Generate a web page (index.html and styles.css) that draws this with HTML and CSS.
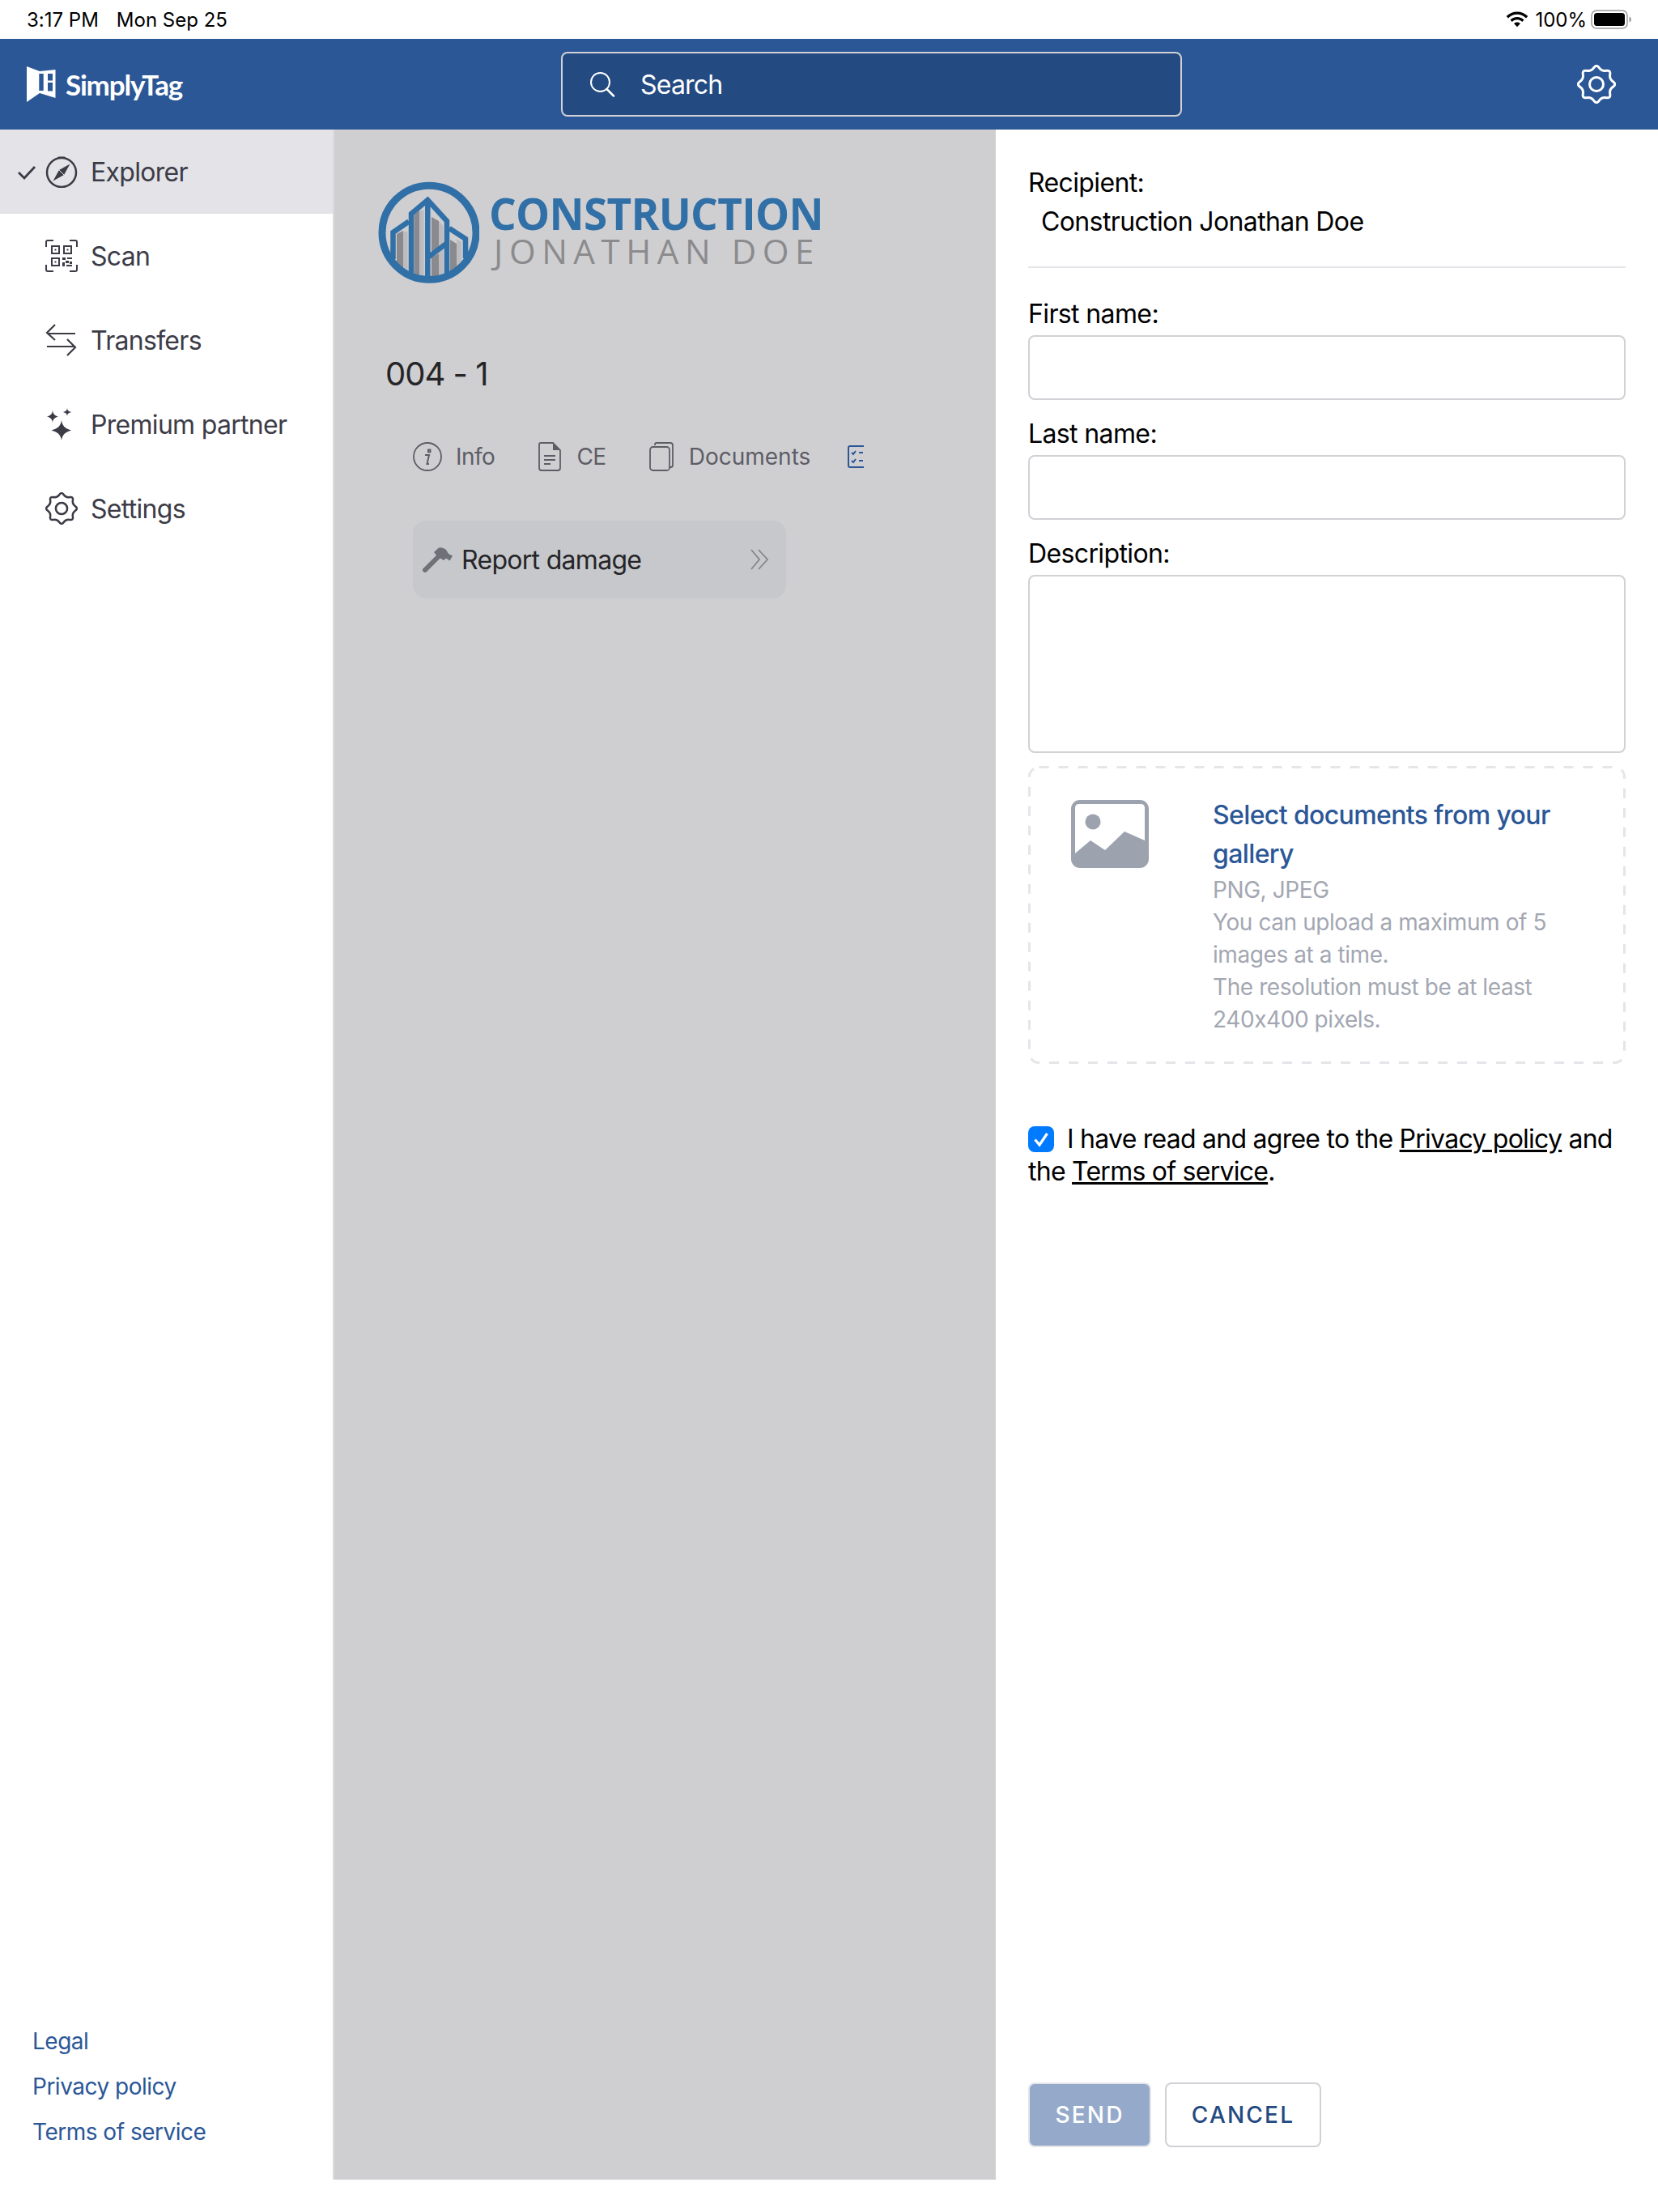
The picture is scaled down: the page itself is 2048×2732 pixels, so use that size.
FILE: index.html
```html
<!DOCTYPE html>
<html lang="en">
<head>
<meta charset="utf-8">
<title>SimplyTag</title>
<link rel="stylesheet" href="styles.css">
</head>
<body>
<svg class="defs" width="0" height="0" aria-hidden="true">
  <symbol id="gear" viewBox="0 0 48 48">
    <path d="M27.26 3.65Q30.51 8.29 36.1 7.3T40.7 11.9T44.36 20.75T44.36 27.26T40.7 36.1T36.1 40.7T27.26 44.36T20.75 44.36T11.9 40.7T7.3 36.1T3.65 27.26T3.65 20.75T7.3 11.9T11.9 7.3T20.75 3.65T27.26 3.65Z" fill="none" stroke="currentColor" stroke-width="3" stroke-linejoin="round"/>
    <circle cx="24" cy="24" r="8.5" fill="none" stroke="currentColor" stroke-width="3"/>
  </symbol>
</svg>
<div class="app">
  <div class="status">
    <div class="status-left"><span>3:17 PM</span><span>Mon Sep 25</span></div>
    <div class="status-right">
      <svg class="wifi" viewBox="0 0 28 20"><path d="M14 0.5C8.8 0.5 4.2 2.5 0.7 6L3 8.4C5.9 5.5 9.7 3.8 14 3.8S22.1 5.5 25 8.4L27.3 6C23.8 2.5 19.2 .5 14 .5ZM14 7C10.7 7 7.8 8.3 5.5 10.5L7.8 12.9C9.4 11.3 11.6 10.3 14 10.3S18.6 11.3 20.2 12.9L22.5 10.5C20.2 8.3 17.3 7 14 7ZM14 13.5C12.4 13.5 11.1 14.1 10 15.1L14 19.3L18 15.1C16.9 14.1 15.6 13.5 14 13.5Z" fill="#000"/></svg>
      <span>100%</span>
      <svg class="battery" viewBox="0 0 50 24"><rect x="1" y="1" width="44" height="22" rx="6" fill="none" stroke="#9a9a9c" stroke-width="1.5"/><rect x="4" y="4" width="38" height="16" rx="3.5" fill="#000"/><path d="M47.5 8.5C49 9 50 10.5 50 12S49 15 47.5 15.5Z" fill="#9a9a9c"/></svg>
    </div>
  </div>
  <header class="topbar">
    <div class="brand">
      <svg class="brand-mark" viewBox="0 0 36 44"><path d="M0 0L16 6L35.5 4V39L16 33L0 44Z" fill="#fff"/><path d="M15.3 9H20.7V30H15.3ZM26 9H32V17.6H26ZM26 20H32V30.5H26Z" fill="#2b5797"/></svg>
      <span class="brand-name">SimplyTag</span>
    </div>
    <div class="search">
      <svg class="search-icon" viewBox="0 0 32 32"><circle cx="13.5" cy="13.5" r="11.5" fill="none" stroke="#fff" stroke-width="2"/><path d="M21.5 22L30 30.5" stroke="#fff" stroke-width="2.5" stroke-linecap="round"/></svg>
      <span>Search</span>
    </div>
    <svg class="top-gear"><use href="#gear"/></svg>
  </header>
  <div class="content">
    <aside class="sidebar">
      <nav class="nav">
        <div class="nav-item active">
          <svg class="nav-check" viewBox="0 0 24 20"><path d="M2 10L9 17L22 3" fill="none" stroke="#3c3c47" stroke-width="2.8"/></svg>
          <svg class="nav-icon" viewBox="0 0 40 40"><circle cx="20" cy="21" r="18" fill="none" stroke="#3c3c47" stroke-width="2.5"/><path d="M16 1.5H24L25 3.5H15Z" fill="#3c3c47"/><path d="M30.5 10.5L23 24L9.5 31.5L17 18Z" fill="#3c3c47"/><path d="M17 18L23 24" stroke="#e3e3e8" stroke-width="1"/></svg>
          <span>Explorer</span>
        </div>
        <div class="nav-item">
          <svg class="nav-icon" viewBox="0 0 40 40"><path d="M1 9V3Q1 1 3 1H10M30 1H37Q39 1 39 3V9M39 31V37Q39 39 37 39H30M10 39H3Q1 39 1 37V31" fill="none" stroke="#3c3c47" stroke-width="2"/><path d="M8 8H17V17H8ZM23 8H32V17H23ZM8 23H17V32H8Z" fill="none" stroke="#3c3c47" stroke-width="2"/><path d="M11.5 11.5H13.5V13.5H11.5ZM26.5 11.5H28.5V13.5H26.5ZM11.5 26.5H13.5V28.5H11.5ZM21 22H25V25H21ZM27 22H33V24H27ZM25 26H29V29H25ZM21 28H24V33H21ZM30 27H33V30H30ZM26 31H33V33H26Z" fill="#3c3c47"/></svg>
          <span>Scan</span>
        </div>
        <div class="nav-item">
          <svg class="nav-icon" viewBox="0 0 40 40"><path d="M37 12H3M12 1L2 11L12 20M2 28H37M27 19L37 29L27 39" fill="none" stroke="#3c3c47" stroke-width="2.2"/></svg>
          <span>Transfers</span>
        </div>
        <div class="nav-item">
          <svg class="nav-icon" viewBox="0 0 40 40"><path d="M20 15C21 22 24 25 32 27.5C24 30 21 33 20 40C19 33 16 30 7.5 27.5C16 25 19 22 20 15ZM9 3C9.6 7 11 9 16 10.5C11 12 9.6 14 9 18C8.4 14 7 12 2 10.5C7 9 8.4 7 9 3ZM27 0C27.4 3 28.5 4 32 5C28.5 6 27.4 7 27 10C26.6 7 25.5 6 22 5C25.5 4 26.6 3 27 0Z" fill="#3c3c47"/></svg>
          <span>Premium partner</span>
        </div>
        <div class="nav-item">
          <svg class="nav-icon nav-gear"><use href="#gear"/></svg>
          <span>Settings</span>
        </div>
      </nav>
      <div class="side-links">
        <a>Legal</a>
        <a>Privacy policy</a>
        <a>Terms of service</a>
      </div>
    </aside>
    <main class="middle">
      <div class="company">
        <svg class="company-mark" viewBox="0 0 125 127">
          <path d="M31 62H36.5V110H31ZM51 36H56.5V118H51ZM75 49L80.5 55V78L75 82ZM75 88L80.5 84V116H75ZM97 71L103 75V98L97 106Z" fill="#bcbcc0"/>
          <path d="M23 65L31 61V108L23 102ZM44.5 41L51 36V117H44.5ZM66 44L75 49V81L66 87ZM66 94L75 89V119H66ZM89 72L97 77V108L89 112Z" fill="#8a8a8e"/>
          <circle cx="63" cy="63.3" r="58" fill="none" stroke="#3170a7" stroke-width="9"/>
          <path d="M18.5 96V63L38 49.5M41 117V40L61.3 23L85 49V114M61.3 23V120M63 93L84 77M88 58L108 71V95" fill="none" stroke="#3170a7" stroke-width="6.5"/>
        </svg>
        <div class="company-text">
          <div class="company-name">CONSTRUCTION</div>
          <div class="company-owner">JONATHAN DOE</div>
        </div>
      </div>
      <h1 class="item-title">004 - 1</h1>
      <div class="tabs">
        <div class="tab tab-info">
          <svg class="tab-icon-info" viewBox="0 0 36 36"><circle cx="18" cy="18" r="17" fill="none" stroke="#5d5d66" stroke-width="1.8"/><path d="M19 9.5h2.5v2.8H19ZM15 16H20L17.5 27H20" fill="none" stroke="#5d5d66" stroke-width="2"/></svg>
          <span>Info</span>
        </div>
        <div class="tab tab-ce">
          <svg class="tab-icon-doc" viewBox="0 0 28 36"><path d="M3 1H18L27 10V32Q27 35 24 35H4Q1 35 1 32V3Q1 1 3 1Z" fill="none" stroke="#5d5d66" stroke-width="1.8"/><path d="M18 1L27 10H18Z" fill="#5d5d66"/><path d="M7 17H21M7 22H21M7 27H15" stroke="#5d5d66" stroke-width="1.8"/></svg>
          <span>CE</span>
        </div>
        <div class="tab tab-docs">
          <svg class="tab-icon-docs" viewBox="0 0 30 36"><path d="M7 4V3Q7 1 9 1H26Q29 1 29 4V28Q29 31 27 31H25" fill="none" stroke="#5d5d66" stroke-width="1.8"/><rect x="1" y="6" width="24" height="29" rx="3.5" fill="none" stroke="#5d5d66" stroke-width="1.8"/></svg>
          <span>Documents</span>
        </div>
        <div class="tab tab-check">
          <svg class="tab-icon-check" viewBox="0 0 24 28"><rect x="1" y="1" width="22" height="26" rx="2" fill="none" stroke="#2b5797" stroke-width="2"/><path d="M5 9L7 11L10 7M5 19L7 21L10 17M14 9H19M14 19H19" fill="none" stroke="#2b5797" stroke-width="2"/></svg>
        </div>
      </div>
      <div class="report">
        <svg class="hammer" viewBox="0 0 37 31"><path d="M3 28L20 11" stroke="#6f7078" stroke-width="6" stroke-linecap="round"/><path d="M14 6L20 0.5Q25 -0.5 29 3L32 8L37 10.5L33.5 16.5L29 13.5L26 16L18 11Z" fill="#6f7078"/></svg>
        <span class="report-label">Report damage</span>
        <svg class="chevrons" viewBox="0 0 22 26"><path d="M1 1L11 13L1 25M10 1L21 13L10 25" fill="none" stroke="#85858c" stroke-width="1.8"/></svg>
      </div>
    </main>
    <section class="panel">
      <div class="recipient">
        <div class="field-label">Recipient:</div>
        <div class="recipient-name">Construction Jonathan Doe</div>
      </div>
      <div class="field">
        <div class="field-label">First name:</div>
        <div class="input"></div>
      </div>
      <div class="field">
        <div class="field-label">Last name:</div>
        <div class="input"></div>
      </div>
      <div class="field">
        <div class="field-label">Description:</div>
        <div class="input textarea"></div>
      </div>
      <div class="dropzone">
        <svg class="dash-frame" width="738" height="368"><rect x="1.5" y="1.5" width="735" height="365" rx="12" fill="none" stroke="#e5e5ea" stroke-width="3" stroke-dasharray="12 12"/></svg>
        <svg class="drop-icon" viewBox="0 0 96 84"><rect width="96" height="84" rx="11" fill="#9ca2ae"/><path d="M5 10Q5 5 10 5H86Q91 5 91 10V50L66 39L42 62L24 50L5 66Z" fill="#fff"/><circle cx="27" cy="27" r="9.5" fill="#9ca2ae"/></svg>
        <div class="drop-text">
          <div class="drop-title">Select documents from your gallery</div>
          <div class="drop-hint">PNG, JPEG</div>
          <div class="drop-hint">You can upload a maximum of 5 images at a time.</div>
          <div class="drop-hint">The resolution must be at least 240x400 pixels.</div>
        </div>
      </div>
      <p class="consent"><span class="checkbox"><svg viewBox="0 0 32 32"><path d="M8.5 16.5L14 23L23.5 9" fill="none" stroke="#fff" stroke-width="3.2"/></svg></span>I have read and agree to the <a>Privacy policy</a> and the <a>Terms of service</a>.</p>
      <div class="actions">
        <div class="btn btn-send">SEND</div>
        <div class="btn btn-cancel">CANCEL</div>
      </div>
    </section>
  </div>
</div>
</body>
</html>
```

FILE: styles.css
```css
* { box-sizing: border-box; }
html, body { margin: 0; padding: 0; }
body { width: 2048px; height: 2732px; background: #fff; font-family: Inter, "Liberation Sans", sans-serif; font-feature-settings: "calt" 0; overflow: hidden; }
.defs { position: absolute; }
.app { display: flex; flex-direction: column; height: 2732px; padding-bottom: 40px; }

.status { flex: 0 0 48px; display: flex; justify-content: space-between; align-items: center; padding: 0 33px; font-size: 24px; color: #000; }
.status-left { display: flex; gap: 22px; }
.status-right { display: flex; align-items: center; }
.wifi { width: 28px; height: 20px; margin-right: 8px; }
.battery { width: 50px; height: 24px; margin-left: 5px; }

.topbar { flex: 0 0 112px; background: #2b5797; display: flex; align-items: center; }
.brand { display: flex; align-items: center; width: 693px; padding-left: 33px; color: #fff; }
.brand-mark { width: 36px; height: 44px; }
.brand-name { font-family: Lato, sans-serif; font-weight: 700; font-size: 35px; margin-left: 12px; letter-spacing: -1.2px; }
.search { width: 767px; height: 80px; background: #244a82; border: 2px solid #d1d1d6; border-radius: 8px; display: flex; align-items: center; padding-left: 33px; color: #fff; font-size: 32px; letter-spacing: -0.8px; }
.search-icon { width: 32px; height: 32px; margin-right: 31px; }
.top-gear { width: 48px; height: 48px; color: #fff; margin-left: 488px; }

.content { flex: 1; display: flex; min-height: 0; }
.sidebar { flex: 0 0 413px; border-right: 2px solid #dcdce0; display: flex; flex-direction: column; justify-content: space-between; }
.nav-item { height: 104px; display: flex; align-items: center; padding-left: 56px; position: relative; font-size: 32px; letter-spacing: -0.7px; color: #3c3c47; }
.nav-item.active { background: #e3e3e8; }
.nav-check { position: absolute; left: 21px; top: 43px; width: 24px; height: 20px; }
.nav-icon { width: 40px; height: 40px; margin-right: 16px; flex: none; }
.nav-gear { color: #3c3c47; }
.side-links { display: flex; flex-direction: column; padding: 0 0 31px 40px; font-size: 28px; line-height: 56px; letter-spacing: -0.5px; color: #2b5797; }

.middle { flex: 0 0 817px; background: #cfcfd2; }
.company { display: flex; align-items: flex-start; padding: 64px 0 0 54px; }
.company-mark { width: 125px; height: 127px; flex: none; }
.company-text { margin-left: 12px; padding-top: 12px; font-family: "Open Sans", sans-serif; }
.company-name { font-size: 53px; line-height: 56px; font-weight: 700; color: #3170a7; letter-spacing: -0.7px; }
.company-owner { font-size: 42px; line-height: 36px; font-weight: 500; color: #8b8b8d; letter-spacing: 7.6px; margin-left: 6px; }
.item-title { margin: 87px 0 0 63px; font-size: 40px; line-height: 48px; font-weight: 400; color: #252528; letter-spacing: -1px; }
.tabs { display: flex; align-items: center; margin: 58px 0 0 97px; width: 557px; height: 40px; overflow: hidden; font-size: 28px; letter-spacing: -0.5px; color: #5d5d66; }
.tab { display: flex; align-items: center; flex: none; }
.tab-info { margin-right: 54px; }
.tab-ce { margin-right: 53px; }
.tab-docs { margin-right: 46px; letter-spacing: 0; }
.tab-icon-info { width: 36px; height: 36px; margin-right: 17px; }
.tab-icon-doc { width: 28px; height: 36px; margin-right: 19px; }
.tab-icon-docs { width: 30px; height: 36px; margin-right: 19px; }
.tab-icon-check { width: 24px; height: 28px; }
.report { display: flex; align-items: center; margin: 59px 0 0 97px; width: 461px; height: 96px; border-radius: 16px; background: #c7c8cc; padding: 0 22px 0 12px; }
.hammer { width: 37px; height: 31px; margin-right: 11px; }
.report-label { font-size: 32px; letter-spacing: -0.7px; color: #252528; flex: 1; }
.chevrons { width: 22px; height: 26px; }

.panel { flex: 1; display: flex; flex-direction: column; padding: 46px 40px 40px; color: #000; font-size: 32px; line-height: 40px; letter-spacing: -0.62px; }
.recipient { padding-bottom: 35px; border-bottom: 2px solid #e5e5ea; margin-bottom: 17px; }
.recipient-name { margin: 8px 0 0 16px; }
.field { padding-top: 20px; }
.field-label { margin-bottom: 6px; }
.field + .field { padding-top: 22px; }
.input { height: 80px; border: 2px solid #d1d1d6; border-radius: 8px; }
.textarea { height: 220px; }
.dropzone { display: flex; position: relative; margin-top: 16px; height: 368px; border-radius: 12px; padding: 37px 32px 0 53px; }
.dash-frame { position: absolute; left: 0; top: 0; }
.drop-icon { width: 96px; height: 84px; flex: none; margin: 5px 79px 0 0; }
.drop-text { width: 440px; }
.drop-title { color: #2b5797; line-height: 48px; font-weight: 500; }
.drop-hint { font-size: 28px; letter-spacing: -0.42px; color: #a3a7b2; }
.consent { margin: 73px 0 0; letter-spacing: -0.75px; }
.checkbox { display: inline-block; width: 32px; height: 32px; border-radius: 8px; background: #007aff; margin-right: 16px; vertical-align: -5px; }
.checkbox svg { display: block; width: 32px; height: 32px; }
.consent a { text-decoration: underline; }
.actions { margin-top: auto; display: flex; gap: 17px; }
.btn { height: 80px; border-radius: 8px; display: flex; align-items: center; justify-content: center; font-size: 28px; letter-spacing: 2.2px; font-weight: 500; }
.btn-send { width: 152px; background: #95aacb; border: 2px solid #e5e5ea; color: #fff; }
.btn-cancel { width: 193px; background: #fff; border: 2px solid #d1d1d6; color: #244a82; }
```
